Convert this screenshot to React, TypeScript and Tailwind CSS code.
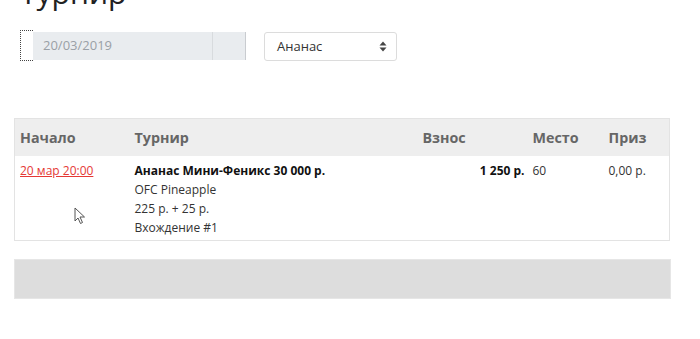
import React from "react";

export default function App() {
  return (
    <div className="w-[700px] h-[339px] overflow-hidden bg-white text-[#212529]" style={{ fontFamily: '"Open Sans", "Liberation Sans", sans-serif' }}>
      <div className="px-[14px]">
        <h1 className="text-[30px] leading-none font-normal text-[#222] -mt-[22px] pl-[6px]">Турнир</h1>
        <div className="flex items-center mt-[22px] pl-[6px]">
          <div className="flex h-[31px] items-stretch">
            <div className="w-[13px] border border-dotted border-[#444] border-r-0"></div>
            <div className="flex mt-[2px] h-[28px]">
              <div className="w-[179px] bg-[#e9ecef] flex items-center pl-[10px] text-[13px] text-[#9aa0a6]">20/03/2019</div>
              <div className="w-[34px] bg-[#e9ecef] border-l border-[#d8dbde] border-r border-r-[#c9ccd0]"></div>
            </div>
          </div>
          <div className="ml-[18px] mt-[2px] w-[133px] h-[29px] border border-[#dcdcdc] rounded-[3px] flex items-center justify-between pl-[12px] pr-[9px] text-[13px] text-[#333]">
            <span>Ананас</span>
            <svg width="8" height="11" viewBox="0 0 8 11">
              <path d="M4 0.5 L7.5 4.5 L0.5 4.5 Z" fill="#444" />
              <path d="M4 10.5 L7.5 6.5 L0.5 6.5 Z" fill="#444" />
            </svg>
          </div>
        </div>
        <table className="mt-[57px] w-[656px] border border-[#e3e3e3] border-collapse text-[12px]">
          <thead>
            <tr className="bg-[#eeeeee] h-[37px] text-left text-[14.3px] font-bold text-[#666]">
              <th className="w-[115px] pl-[5px] pr-[6px] font-bold">Начало</th>
              <th className="w-[288px] pl-[5px] pr-[6px] font-bold">Турнир</th>
              <th className="w-[110px] pl-[5px] pr-[6px] font-bold">Взнос</th>
              <th className="w-[76px] pl-[5px] pr-[6px] font-bold">Место</th>
              <th className="pl-[5px] pr-[6px] font-bold">Приз</th>
            </tr>
          </thead>
          <tbody>
            <tr className="align-top leading-[19px]">
              <td className="pl-[5px] pr-[6px] pt-[5px] pb-[3px]">
                <a href="#" className="text-[#e53935] underline">20 мар 20:00</a>
              </td>
              <td className="pl-[5px] pr-[6px] pt-[5px] pb-[3px] text-[#333]">
                <div className="font-bold text-[#111]">Ананас Мини-Феникс 30 000 р.</div>
                <div>OFC Pineapple</div>
                <div>225 р. + 25 р.</div>
                <div>Вхождение #1</div>
              </td>
              <td className="pl-[5px] pr-[3px] pt-[5px] text-right font-bold text-[#111]">1 250 р.</td>
              <td className="pl-[5px] pr-[6px] pt-[5px] text-[#333]">60</td>
              <td className="pl-[5px] pr-[6px] pt-[5px] text-[#333]">0,00 р.</td>
            </tr>
          </tbody>
        </table>
        <div className="mt-[18px] w-[657px] h-[40px] bg-[#dddddd] border border-[#e6e6e6]"></div>
      </div>
      <svg className="absolute left-[74px] top-[207px]" width="12" height="18" viewBox="0 0 12 18">
        <path d="M1 1 L1 14 L4 11 L6.5 16.5 L8.5 15.5 L6 10 L10.5 10 Z" fill="#fff" stroke="#555" strokeWidth="1" strokeLinejoin="round" />
      </svg>
    </div>
  );
}
